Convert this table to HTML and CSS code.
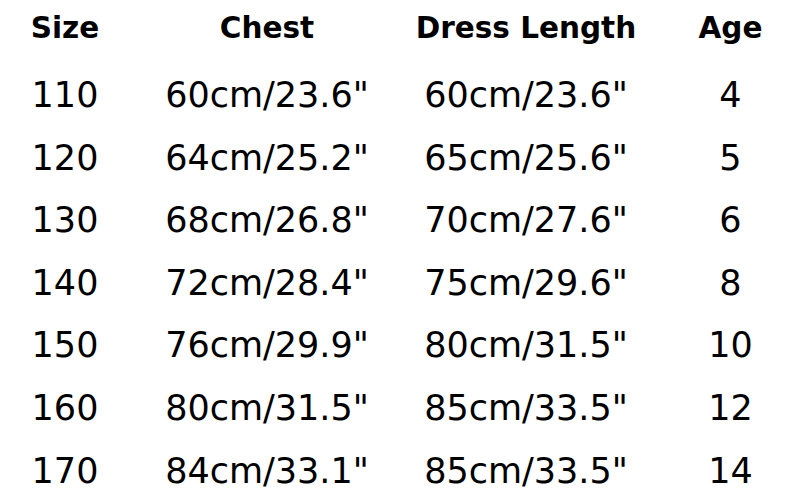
FILE: index.html
```html
<!DOCTYPE html>
<html>
<head>
<meta charset="utf-8">
<link rel="stylesheet" href="styles.css">
</head>
<body>
<div class="chart">
  <div class="cell head">Size</div>
  <div class="cell head">Chest</div>
  <div class="cell head">Dress Length</div>
  <div class="cell head age">Age</div>

  <div class="cell">110</div><div class="cell">60cm/23.6"</div><div class="cell">60cm/23.6"</div><div class="cell age">4</div>
  <div class="cell">120</div><div class="cell">64cm/25.2"</div><div class="cell">65cm/25.6"</div><div class="cell age">5</div>
  <div class="cell">130</div><div class="cell">68cm/26.8"</div><div class="cell">70cm/27.6"</div><div class="cell age">6</div>
  <div class="cell">140</div><div class="cell">72cm/28.4"</div><div class="cell">75cm/29.6"</div><div class="cell age">8</div>
  <div class="cell">150</div><div class="cell">76cm/29.9"</div><div class="cell">80cm/31.5"</div><div class="cell age">10</div>
  <div class="cell">160</div><div class="cell">80cm/31.5"</div><div class="cell">85cm/33.5"</div><div class="cell age">12</div>
  <div class="cell">170</div><div class="cell">84cm/33.1"</div><div class="cell">85cm/33.5"</div><div class="cell age">14</div>
</div>
</body>
</html>
```
FILE: styles.css
```css
html, body {
  margin: 0;
  padding: 0;
  background: #ffffff;
}
.chart {
  display: grid;
  grid-template-columns: 130px 274px 244px 145px;
  width: 793px;
  font-family: "DejaVu Sans", Verdana, sans-serif;
  color: #000;
}
.cell {
  text-align: center;
  font-size: 35px;
  line-height: 62.6px;
  white-space: nowrap;
}
.head {
  font-size: 29.5px;
  font-weight: bold;
  line-height: 57px;
  padding-bottom: 7px;
}
.age {
  padding-left: 20px;
}
```
